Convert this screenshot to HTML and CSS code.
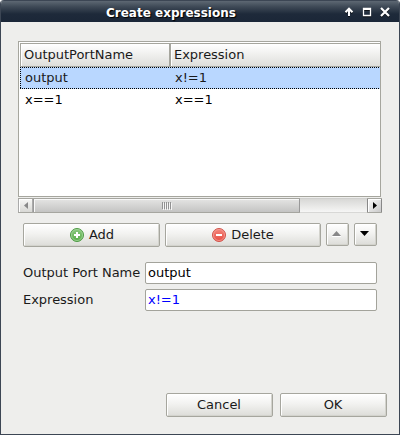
FILE: index.html
```html
<!DOCTYPE html>
<html lang="en">
<head>
<meta charset="utf-8">
<title>Create expressions</title>
<link rel="stylesheet" href="styles.css">
</head>
<body>
<div class="window">
  <header class="titlebar">
    <h1 class="title">Create expressions</h1>
    <div class="controls">
      <svg width="10" height="10" viewBox="0 0 10 10"><path d="M5 9V2M1.500 5.200L5 1.700L8.500 5.200" fill="none" stroke="#fff" stroke-width="2"/></svg>
      <svg width="10" height="10" viewBox="0 0 10 10"><path d="M1.500 1.500h7v7h-7z" fill="none" stroke="#fff" stroke-width="1.300"/><path d="M1 2h8" stroke="#fff" stroke-width="2"/></svg>
      <svg width="10" height="10" viewBox="0 0 10 10"><path d="M1 1l8 8M9 1l-8 8" stroke="#fff" stroke-width="2.200"/></svg>
    </div>
  </header>
  <main class="content">
    <div class="table">
      <div class="row head"><span>OutputPortName</span><span>Expression</span></div>
      <div class="row selected"><span>output</span><span>x!=1</span></div>
      <div class="row"><span>x==1</span><span>x==1</span></div>
    </div>
    <div class="scrollbar">
      <div class="arrow"><svg width="4" height="7" viewBox="0 0 4 7"><path d="M4 0v7L0 3.500z" fill="#888"/></svg></div>
      <div class="thumb"><i></i><i></i><i></i><i></i><i></i></div>
      <div class="track"></div>
      <div class="arrow end"><svg width="4" height="7" viewBox="0 0 4 7"><path d="M0 0v7l4-3.500z" fill="#000"/></svg></div>
    </div>
    <div class="actions">
      <button class="btn add"><svg width="14" height="14" viewBox="0 0 14 14"><defs><linearGradient id="g" x2="0" y2="1"><stop stop-color="#8bc980"/><stop offset="1" stop-color="#58ad48"/></linearGradient></defs><circle cx="7" cy="7" r="6.500" fill="url(#g)" stroke="#4e9a45"/><circle cx="7" cy="7" r="5.500" fill="none" stroke="#a5d69c" stroke-width=".8"/><path d="M7 4v6M4 7h6" stroke="#fff" stroke-width="2"/></svg>Add</button>
      <button class="btn delete"><svg width="14" height="14" viewBox="0 0 14 14"><defs><linearGradient id="r" x2="0" y2="1"><stop stop-color="#f4877c"/><stop offset="1" stop-color="#e84c42"/></linearGradient></defs><circle cx="7" cy="7" r="6.500" fill="url(#r)" stroke="#cf544b"/><circle cx="7" cy="7" r="5.500" fill="none" stroke="#f5a098" stroke-width=".8"/><path d="M4 7h6" stroke="#fff" stroke-width="2"/></svg>Delete</button>
      <button class="btn move"><svg width="9" height="6" viewBox="0 0 9 6"><path d="M0 5.500h9" stroke="#fff"/><path d="M0 5L4.500 0L9 5z" fill="#888"/></svg></button>
      <button class="btn move"><svg width="9" height="6" viewBox="0 0 9 6"><path d="M0 0h9L4.500 5z" fill="#000"/></svg></button>
    </div>
    <div class="form">
      <label>Output Port Name</label><div class="field">output</div>
      <label>Expression</label><div class="field code">x!=1</div>
    </div>
    <footer class="footer"><button class="btn">Cancel</button><button class="btn">OK</button></footer>
  </main>
</div>
</body>
</html>
```
FILE: styles.css
```css
* { box-sizing: border-box; }
body { margin: 0; background: #fff; color: #1a1a1a; font: 13px/16px "DejaVu Sans", sans-serif; letter-spacing: -.02px; }
.window { width: 400px; height: 435px; display: flex; flex-direction: column; background: #eeeeec; border: 1px solid #3c4654; border-top: 0; border-radius: 4px 4px 0 0; overflow: hidden; }
.titlebar { flex: none; height: 22px; display: flex; align-items: center; background: linear-gradient(#3c4654 0 1px, #5e6873 1px, #3d4855 7px, #1e2a3a 14px, #1b2738 21px, #1b2738); color: #fff; }
.title { flex: 1; margin: 3px 0 0 105px; font-size: 12px; line-height: 16px; font-weight: bold; letter-spacing: 0; text-shadow: 1px 1px 1px #000; white-space: nowrap; }
.controls { display: flex; gap: 8px; margin: 2px 9px 0 0; }
.controls svg { filter: drop-shadow(0 1px 0 #000a); }
.content { flex: 1; padding: 19px 17px 0; display: flex; flex-direction: column; }
.table { width: 363px; height: 156px; padding: 1px 0 1px 1px; border: 1px solid #a6a69e; background: #fff; color: #000; }
.row { height: 22px; display: grid; grid-template-columns: 150px 1fr; align-items: center; border: 1px solid transparent; border-width: 1px 0; }
.row span { padding-left: 5px; }
.head { height: 24px; border: 0; border-top: 1px solid #a6a69e; border-bottom: 1px solid #a6a69e; background: linear-gradient(#fff, #dededb); color: #1a1a1a; }
.head span { height: 22px; line-height: 22px; padding-left: 3px; border-left: 1px solid #a6a69e; box-shadow: inset 1px 0 #fff; }
.head span:first-child { border-right: 1px solid #a6a69e; }
.selected { background: repeating-linear-gradient(90deg, #000 0 1px, #b9d7ff 1px 2px) top / 100% 1px no-repeat, repeating-linear-gradient(90deg, #000 0 1px, #b9d7ff 1px 2px) bottom / 100% 1px no-repeat, repeating-linear-gradient(#000 0 1px, #b9d7ff 1px 2px) left / 1px 100% no-repeat, #b9d7ff; background-origin: border-box; color: #1a1a1a; }
.scrollbar { width: 364px; height: 15px; margin-top: 1px; display: flex; border-top: 1px solid #a6a6a0; border-bottom: 1px solid #a6a6a0; }
.arrow { width: 15px; display: flex; align-items: center; justify-content: center; background: linear-gradient(#f7f7f5, #d8d8d5); border: 1px solid #aaa; border-width: 0 1px; box-shadow: inset 1px 1px #fff; }
.arrow.end { background: linear-gradient(135deg, #fafafa, #c9c9c9); border-color: #888; }
.thumb { width: 267px; display: flex; gap: 1px; align-items: center; justify-content: center; border: 1px solid #999; border-width: 0 1px; background: linear-gradient(#e4e4e3, #c4c4c3); box-shadow: inset 1px 1px #f8f8f8; }
.thumb i { width: 1px; height: 7px; background: #929292; box-shadow: 1px 1px #f5f5f5; }
.track { flex: 1; background: linear-gradient(#d8d8d6, #f6f6f5); box-shadow: 0 -1px #d0d0ce, 0 1px #d8d8d6; }
.actions { display: flex; margin: 10px 0 0 5px; height: 25px; }
.btn { height: 24px; padding: 0; display: flex; align-items: center; justify-content: center; border: 1px solid #a6a69e; border-radius: 2px; background: linear-gradient(#fff, #f2f2f0 45%, #dcdcd8); box-shadow: inset 1px 1px #fff, inset -1px -1px #d3d3cd; color: #1a1a1a; font: inherit; letter-spacing: inherit; }
.add { width: 137px; gap: 5px; padding-left: 1px; }
.delete { width: 156px; margin-left: 5px; gap: 5px; }
.move { width: 23px; height: 23px; margin-left: 5px; padding: 0 2px 1px 0; }
.form { display: grid; grid-template-columns: 122px 232px; grid-auto-rows: 22px; row-gap: 5px; align-items: center; margin: 14px 0 0 5px; }
.field { height: 22px; padding: 2px; border: 1px solid #a3a39b; border-radius: 2px; background: #fff; color: #000; }
.code { color: #00f; }
.footer { display: flex; gap: 7px; margin: 82px 0 0 148px; }
.footer .btn { width: 107px; flex: none; padding-right: 1px; }
```
